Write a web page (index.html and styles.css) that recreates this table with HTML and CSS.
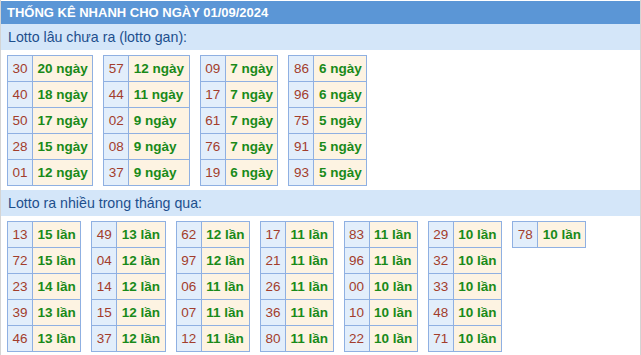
FILE: index.html
```html
<!DOCTYPE html>
<html lang="vi">
<head>
<meta charset="utf-8">
<title>Thống kê nhanh</title>
<link rel="stylesheet" href="styles.css">
</head>
<body>
<div class="wrap">
  <div class="title">THỐNG KÊ NHANH CHO NGÀY 01/09/2024</div>
  <div class="sub">Lotto lâu chưa ra (lotto gan):</div>
  <div class="tables">
    <table class="lt">
      <tr><td class="n">30</td><td class="v">20 ngày</td></tr>
      <tr><td class="n">40</td><td class="v">18 ngày</td></tr>
      <tr><td class="n">50</td><td class="v">17 ngày</td></tr>
      <tr><td class="n">28</td><td class="v">15 ngày</td></tr>
      <tr><td class="n">01</td><td class="v">12 ngày</td></tr>
    </table>
    <table class="lt">
      <tr><td class="n">57</td><td class="v">12 ngày</td></tr>
      <tr><td class="n">44</td><td class="v">11 ngày</td></tr>
      <tr><td class="n">02</td><td class="v">9 ngày</td></tr>
      <tr><td class="n">08</td><td class="v">9 ngày</td></tr>
      <tr><td class="n">37</td><td class="v">9 ngày</td></tr>
    </table>
    <table class="lt">
      <tr><td class="n">09</td><td class="v">7 ngày</td></tr>
      <tr><td class="n">17</td><td class="v">7 ngày</td></tr>
      <tr><td class="n">61</td><td class="v">7 ngày</td></tr>
      <tr><td class="n">76</td><td class="v">7 ngày</td></tr>
      <tr><td class="n">19</td><td class="v">6 ngày</td></tr>
    </table>
    <table class="lt">
      <tr><td class="n">86</td><td class="v">6 ngày</td></tr>
      <tr><td class="n">96</td><td class="v">6 ngày</td></tr>
      <tr><td class="n">75</td><td class="v">5 ngày</td></tr>
      <tr><td class="n">91</td><td class="v">5 ngày</td></tr>
      <tr><td class="n">93</td><td class="v">5 ngày</td></tr>
    </table>
  </div>
  <div class="sub">Lotto ra nhiều trong tháng qua:</div>
  <div class="tables">
    <table class="lt">
      <tr><td class="n">13</td><td class="v">15 lần</td></tr>
      <tr><td class="n">72</td><td class="v">15 lần</td></tr>
      <tr><td class="n">23</td><td class="v">14 lần</td></tr>
      <tr><td class="n">39</td><td class="v">13 lần</td></tr>
      <tr><td class="n">46</td><td class="v">13 lần</td></tr>
    </table>
    <table class="lt">
      <tr><td class="n">49</td><td class="v">13 lần</td></tr>
      <tr><td class="n">04</td><td class="v">12 lần</td></tr>
      <tr><td class="n">14</td><td class="v">12 lần</td></tr>
      <tr><td class="n">15</td><td class="v">12 lần</td></tr>
      <tr><td class="n">37</td><td class="v">12 lần</td></tr>
    </table>
    <table class="lt">
      <tr><td class="n">62</td><td class="v">12 lần</td></tr>
      <tr><td class="n">97</td><td class="v">12 lần</td></tr>
      <tr><td class="n">06</td><td class="v">11 lần</td></tr>
      <tr><td class="n">07</td><td class="v">11 lần</td></tr>
      <tr><td class="n">12</td><td class="v">11 lần</td></tr>
    </table>
    <table class="lt">
      <tr><td class="n">17</td><td class="v">11 lần</td></tr>
      <tr><td class="n">21</td><td class="v">11 lần</td></tr>
      <tr><td class="n">26</td><td class="v">11 lần</td></tr>
      <tr><td class="n">36</td><td class="v">11 lần</td></tr>
      <tr><td class="n">80</td><td class="v">11 lần</td></tr>
    </table>
    <table class="lt">
      <tr><td class="n">83</td><td class="v">11 lần</td></tr>
      <tr><td class="n">96</td><td class="v">11 lần</td></tr>
      <tr><td class="n">00</td><td class="v">10 lần</td></tr>
      <tr><td class="n">10</td><td class="v">10 lần</td></tr>
      <tr><td class="n">22</td><td class="v">10 lần</td></tr>
    </table>
    <table class="lt">
      <tr><td class="n">29</td><td class="v">10 lần</td></tr>
      <tr><td class="n">32</td><td class="v">10 lần</td></tr>
      <tr><td class="n">33</td><td class="v">10 lần</td></tr>
      <tr><td class="n">48</td><td class="v">10 lần</td></tr>
      <tr><td class="n">71</td><td class="v">10 lần</td></tr>
    </table>
    <table class="lt">
      <tr><td class="n">78</td><td class="v">10 lần</td></tr>
    </table>
  </div>
</div>
</body>
</html>
```
FILE: styles.css
```css
html, body {
  margin: 0;
  padding: 0;
  background: #ffffff;
}
body {
  font-family: "Liberation Sans", Arial, sans-serif;
  font-size: 13px;
}
.wrap {
  width: 641px;
  box-sizing: border-box;
  border-left: 1px solid #d4d4d4;
  border-right: 1px solid #d4d4d4;
  padding-top: 1px;
  height: 355px;
  overflow: hidden;
}
.title {
  background: #5b96d6;
  color: #ffffff;
  font-weight: bold;
  font-size: 13px;
  height: 23px;
  line-height: 23px;
  padding-left: 6px;
}
.sub {
  background: #d4e6f9;
  color: #1d4f8d;
  font-size: 14.2px;
  height: 26px;
  line-height: 26px;
  padding-left: 7px;
}
.tables {
  display: flex;
  align-items: flex-start;
  gap: 10px;
  padding: 5px 6px 4px 6px;
}
.lt {
  border-collapse: collapse;
  border: 1px solid #8fb0e2;
}
.lt td {
  border: 1px solid #8fb0e2;
  height: 26px;
  box-sizing: border-box;
  padding: 0 4.5px;
  font-size: 13.5px;
  line-height: 16px;
  white-space: nowrap;
}
.lt .n {
  background: #e2eefb;
  color: #a23d2c;
}
.lt .v {
  background: #fdf3e2;
  color: #198a19;
  font-weight: bold;
}
```
